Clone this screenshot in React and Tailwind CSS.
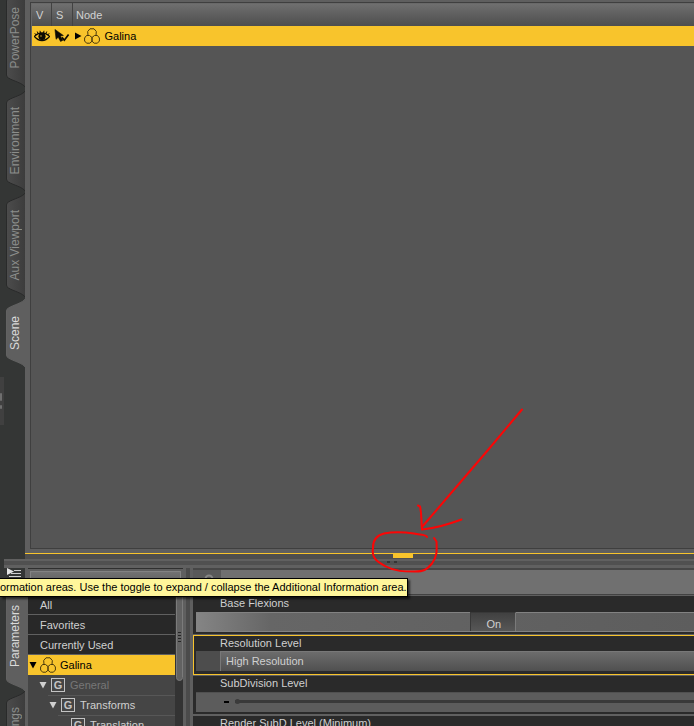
import { useState } from 'react';

const NodeIcon = ({ className = '' }) => (
  <svg viewBox="0 0 16 16" className={`w-4 h-4 shrink-0 ${className}`} fill="none" stroke="#4a390c" strokeWidth="1">
    <path d="M4 7.500L3.700 3.500 6 .8h4l2.300 2.700L12 7.500" />
    <path d="M8 9.500L5.500 7.500h-3L.6 10v3l2 2.200h3.200L8 13.200z" />
    <path d="M8 9.500l2.500-2h3L15.400 10v3l-2 2.200h-3.200L8 13.200z" />
  </svg>
);

const EyeIcon = () => (
  <svg viewBox="0 0 16 12" className="w-4 h-3 block" fill="none" stroke="#0c0a04">
    <path d="M.5 6.500C3 3.500 5.500 3 8 3s5 .8 7.500 3.500C13 9.500 10.500 10.500 8 10.500S3 9.500.5 6.500z" strokeWidth="1.300" />
    <circle cx="8" cy="6.500" r="3.200" fill="#0c0a04" />
    <path d="M2 4.800L.8 3.300M4.200 3.700L3.200 1.500M6.500 3L6 .8M9.500 3l.5-2.200M11.800 3.700l1-2.200M14 4.800l1.200-1.500" />
    <circle cx="7" cy="6" r=".7" fill="#f8c42c" stroke="none" />
  </svg>
);

const SelectIcon = () => (
  <svg viewBox="0 0 17 14" className="w-4 h-3.5 block">
    <path d="M1 0l9 6.500-3.300.5 2.800 4.500-2.500 1.300L4.500 8.300 2.200 10.500z" fill="#0c0a04" stroke="#0c0a04" strokeWidth=".6" />
    <path d="M8.500 8.500l2.500 3L15.500 5.500" fill="none" stroke="#0c0a04" strokeWidth="1.800" />
  </svg>
);

const Triangle = ({ open, className = '' }) => (
  <svg viewBox="0 0 8 8" className={`w-2 h-2 shrink-0 ${className}`} fill="currentColor">
    <path d={open ? 'M.5 1h7L4 7.500z' : 'M1 .5v7L7.500 4z'} />
  </svg>
);

const GroupIcon = () => (
  <span className="flex w-3.5 h-3.5 shrink-0 items-center justify-center border border-[#c4c4c4] text-[11px] leading-3 font-bold text-[#c4c4c4]">
    G
  </span>
);

// Vertical dock tab with curved shoulders
const DockTab = ({ label, height, active, onClick, className = '' }) => {
  const h = height;
  const shape = `M19.500 .5C17 5 7 7 2.500 10Q.5 11 .5 13V${h - 13}Q.5 ${h - 11} 2.500 ${h - 10}C7 ${h - 7} 17 ${h - 5} 19.500 ${h - 0.5}`;
  return (
    <button
      type="button"
      role="tab"
      aria-selected={active}
      onClick={onClick}
      style={{ height: h }}
      className={`relative flex w-[19px] shrink-0 items-center justify-center pr-0.5 ${className}`}
    >
      <svg width="19" height={h} className="absolute inset-0">
        <defs>
          <linearGradient id="tabFill" x1="0" x2="1" y1="0" y2="0">
            <stop offset="0" stopColor="#4c4c4c" />
            <stop offset="1" stopColor="#3c3c3c" />
          </linearGradient>
        </defs>
        <path d={shape} fill={active ? '#5f5f5f' : 'url(#tabFill)'} stroke={active ? '#626262' : '#292a2a'} />
      </svg>
      <span
        className={`relative rotate-180 whitespace-nowrap text-[12px] leading-4 [writing-mode:vertical-rl] ${
          active ? 'text-[#dadada]' : 'text-[#8c8e8c]'
        }`}
      >
        {label}
      </span>
    </button>
  );
};

const upperTabs = [
  { label: 'PowerPose', height: 100, className: '-mt-3' },
  { label: 'Environment', height: 102, className: 'mt-0.5' },
  { label: 'Aux Viewport', height: 106, className: '' },
  { label: 'Scene', height: 70, className: '' },
];

const SceneTree = () => (
  <div className="ml-[5px] mt-0.5 flex-1 min-h-0 overflow-hidden border-l border-t border-b border-[#3f3f3f] bg-[#555555]">
    <table className="w-full table-fixed border-collapse border-l border-t border-[#696969] text-left">
      <thead>
        <tr className="h-[22px] bg-linear-to-b from-[#6f6f6f] to-[#4e4e4e] text-[#d2d2d2]">
          <th className="w-5 border-r border-[#424242] p-0 pl-1 font-normal">V</th>
          <th className="w-[21px] border-r border-[#424242] p-0 pl-1 font-normal">S</th>
          <th className="p-0 pl-[3px] font-normal">Node</th>
        </tr>
      </thead>
      <tbody>
        <tr className="h-5 bg-[#f8c42c] text-black">
          <td className="p-0 pl-0.5">
            <button type="button" aria-label="Visible" className="block"><EyeIcon /></button>
          </td>
          <td className="p-0 pl-0.5">
            <button type="button" aria-label="Selectable" className="block"><SelectIcon /></button>
          </td>
          <td className="p-0">
            <div className="flex items-center">
              <Triangle className="ml-px" />
              <NodeIcon className="ml-0.5" />
              <span className="ml-[5px]">Galina</span>
            </div>
          </td>
        </tr>
      </tbody>
    </table>
  </div>
);

// Freehand circle and arrow over the toggle
const Annotation = () => (
  <svg
    width="180"
    height="190"
    viewBox="0 0 180 190"
    fill="none"
    stroke="#fb0606"
    strokeWidth="2"
    strokeLinecap="round"
    className="pointer-events-none absolute bottom-[-31px] left-[335px] z-10"
  >
    <path d="M162 9.500L128 50 98 85 62 127" />
    <path d="M58 105.500l2 1c2 8 1 15 2 23 13-1 26-5 39.500-10" />
    <path d="M67 137c-1-3-8-2-13-3.500C43 132 32 132 24 133.500c-8 2-11 7-11 14-2 12 6 15 13 19 9 5 18 5 29 5 9 0 12-2 17-8 5-7 5-12 4.500-22l-2.500-3.500" />
  </svg>
);

const filters = ['All', 'Favorites', 'Currently Used'];

const ParameterGroups = () => (
  <div className="flex w-[155px] shrink-0 flex-col border-t border-[#2f2f2f]">
    <input
      type="text"
      aria-label="Node"
      defaultValue="Galina"
      className="mx-0.5 mt-0.5 h-[22px] w-[151px] border border-[#828282] bg-linear-to-b from-[#727272] to-[#515151] px-1.5 text-[#d2d2d2] outline-none"
    />
    <div className="flex flex-1 min-h-0">
      <div className="flex-1 min-w-0 overflow-hidden bg-[#454545] text-[#d0d0d0]">
        <ul className="bg-[#282828] pt-0.5">
          {filters.map((name) => (
            <li key={name} className="border-b border-[#606060]">
              <button type="button" className="block h-[19px] w-full pl-3 text-left">{name}</button>
            </li>
          ))}
        </ul>
        <div className="flex h-5 items-center bg-[#f8c42c] text-black">
          <Triangle open className="ml-px" />
          <NodeIcon className="ml-[3px]" />
          <span className="ml-1">Galina</span>
        </div>
        <div className="flex h-5 items-center pl-[11px]">
          <Triangle open className="mr-1" />
          <GroupIcon />
          <span className="ml-[5px] text-[#777777]">General</span>
        </div>
        <div className="ml-5 flex h-5 items-center border-t border-[#575757] pb-px pl-px">
          <Triangle open className="mr-1" />
          <GroupIcon />
          <span className="ml-[5px]">Transforms</span>
        </div>
        <div className="ml-[30px] flex h-5 items-center border-t border-[#575757] pb-px pl-[13px]">
          <GroupIcon />
          <span className="ml-[5px]">Translation</span>
        </div>
      </div>
      {/* Scrollbar */}
      <div className="w-2 bg-[#333333] pl-px">
        <div className="flex h-[88px] flex-col items-center justify-center gap-0.5 rounded-b-sm border border-[#7b7b7b] bg-[#626262]">
          <i className="h-px w-[3px] bg-[#252525]" />
          <i className="h-px w-[3px] bg-[#252525]" />
          <i className="h-px w-[3px] bg-[#252525]" />
          <i className="h-px w-[3px] bg-[#252525]" />
        </div>
      </div>
    </div>
  </div>
);

const ParameterList = ({ flexions, onToggle }) => (
  <div className="flex flex-1 min-w-0 flex-col overflow-hidden text-[#d0d0d0]">
    <label className="flex h-[27px] shrink-0 items-center border-t-2 border-b border-t-[#464646] border-b-[#424242] bg-[#595959]">
      <svg viewBox="0 0 12 12" className="ml-2.5 mr-1.5 mb-1 h-3 w-3" fill="none" stroke="#858585" strokeWidth="2">
        <circle cx="6" cy="5" r="3.500" />
        <path d="M3.500 8L1 11" />
      </svg>
      <input type="search" aria-label="Filter parameters" className="h-full flex-1 min-w-0 bg-[#707070] outline-none" />
    </label>

    <div className="mt-px h-[39px] shrink-0 border-b border-[#606060] bg-[#2a2a2a] pl-[3px]">
      <p className="h-4 pl-6 leading-[14px]">Base Flexions</p>
      <div className="flex h-5 border-y border-[#828282] bg-linear-to-r from-[#858585] via-[#666666] via-15% to-[#5d5d5d]">
        <div className="w-[55%]" />
        <button
          type="button"
          aria-pressed={flexions}
          onClick={onToggle}
          className="-mt-px h-[19px] w-[46px] border-x border-t border-[#383838] border-r-[#7a7a7a] bg-linear-to-b from-[#414141] to-[#575757] pt-1 pl-0.5 leading-[14px]"
        >
          {flexions ? 'On' : 'Off'}
        </button>
      </div>
    </div>

    <div className="h-10 shrink-0 border border-r-0 border-[#f8c42c] bg-[#2a2a2a] pl-0.5">
      <label htmlFor="resolution" className="block h-[15px] pl-6 leading-[14px]">Resolution Level</label>
      <div className="flex h-5 bg-[#4d4d4d]">
        <select
          id="resolution"
          className="ml-6 flex-1 appearance-none border-l border-t border-[#787878] bg-linear-to-b from-[#6c6c6c] to-[#505050] pb-0.5 pl-[5px] outline-none"
        >
          <option>High Resolution</option>
          <option>Base</option>
        </select>
      </div>
    </div>

    <div className="h-10 shrink-0 border-y border-[#606060] bg-[#2a2a2a] pl-[3px]">
      <label htmlFor="subdivision" className="block h-4 pl-6 leading-[14px]">SubDivision Level</label>
      <div className="flex h-5 items-center border-t border-[#505050] bg-[#5c5c5c] pb-0.5">
        <button type="button" aria-label="Decrease" className="ml-7 mr-1.5 flex h-3 w-[5px] items-center">
          <span className="h-0.5 w-[5px] bg-black" />
        </button>
        <input
          id="subdivision"
          type="range"
          min="0"
          max="4"
          defaultValue="0"
          className="h-[3px] flex-1 appearance-none bg-[#393939] [&::-webkit-slider-thumb]:h-[5px] [&::-webkit-slider-thumb]:w-[5px] [&::-webkit-slider-thumb]:appearance-none [&::-webkit-slider-thumb]:rounded-full [&::-webkit-slider-thumb]:bg-[#3b3b3b]"
        />
      </div>
    </div>

    <div className="flex-1 border-t border-[#606060] bg-[#2a2a2a] pl-[27px]">
      <p className="leading-[14px]">Render SubD Level (Minimum)</p>
    </div>
  </div>
);

const App = () => {
  const [upper, setUpper] = useState('Scene');
  const [lower, setLower] = useState('Parameters');
  const [flexions, setFlexions] = useState(true);

  return (
    <div className="flex h-screen flex-col overflow-hidden bg-[#343635] font-['Liberation_Sans',Arial,sans-serif] text-[11px] leading-4">
      {/* Scene pane */}
      <div className="flex flex-1 min-h-0">
        <div className="flex w-[25px] shrink-0 overflow-hidden">
          <div className="w-1 pt-[377px]">
            <div className="flex h-12 flex-col justify-center gap-1 bg-[#404040]">
              <i className="h-2 w-0.5 rounded-full bg-[#6f6f6f]" />
              <i className="h-1 w-0.5 rounded-full bg-[#6f6f6f]" />
            </div>
          </div>
          <div role="tablist" className="ml-0.5 flex flex-col">
            {upperTabs.map((tab) => (
              <DockTab key={tab.label} {...tab} active={upper === tab.label} onClick={() => setUpper(tab.label)} />
            ))}
          </div>
        </div>

        <div className="relative flex flex-1 min-w-0 flex-col bg-[#5f5f5f]">
          <SceneTree />
          <div className="mt-1 h-px bg-[#f8c42c]" />
          <div className="h-[5px] bg-[#4e4e4e]">
            <button type="button" aria-label="Toggle Additional Information" className="ml-[55%] block h-1 w-5 bg-[#f8c42c]" />
          </div>
          <Annotation />
        </div>
      </div>

      {/* Parameters pane */}
      <div className="relative h-[167px] shrink-0 pl-1">
        <div className="h-[9px] border-t-2 border-b-[3px] border-[#606060] bg-[#505050] pl-[383px]">
          <div className="flex gap-1">
            <i className="h-0.5 w-[3px] bg-[#343434]" />
            <i className="h-0.5 w-[3px] bg-[#343434]" />
          </div>
        </div>
        <div className="flex h-[158px] bg-[#5f5f5f]">
          <div className="flex w-[21px] shrink-0 flex-col overflow-hidden bg-[#343635] pl-0.5">
            <button type="button" aria-label="Pane menu" className="h-3 w-[19px] shrink-0">
              <svg viewBox="0 0 19 12" className="block h-3 w-[19px]">
                <path d="M1 0l7 3.500-7 3.500z" fill="#e4e4e4" />
                <path d="M8 2.500h7M5 5.500h10M3 8.500h12" stroke="#d0d0d0" />
              </svg>
            </button>
            <div role="tablist" className="flex flex-col">
              <DockTab label="Parameters" height={112} active={lower === 'Parameters'} onClick={() => setLower('Parameters')} />
              <DockTab label="Tool Settings" height={103} active={lower === 'Tool Settings'} onClick={() => setLower('Tool Settings')} className="-mt-0.5" />
            </div>
          </div>
          <div className="flex flex-1 min-w-0 pl-[3px]">
            <ParameterGroups />
            <div className="mx-[3px] w-1 shrink-0 bg-[#4b4b4b]" />
            <ParameterList flexions={flexions} onToggle={() => setFlexions(!flexions)} />
          </div>
        </div>
        <div
          role="tooltip"
          className="absolute left-0 top-[19px] z-20 h-[19px] whitespace-nowrap border border-l-0 border-black bg-[#fff69b] leading-[17px] text-black shadow-[2px_2px_2px_rgba(0,0,0,0.6)]"
        >
          ormation areas. Use the toggle to expand / collapse the Additional Information area.
        </div>
      </div>
    </div>
  );
};

export default App;
